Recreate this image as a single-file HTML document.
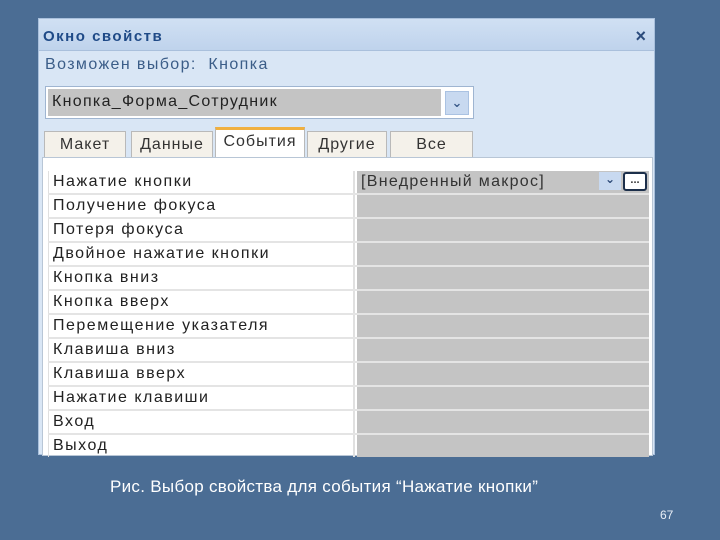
<!DOCTYPE html>
<html><head><meta charset="utf-8"><style>
*{margin:0;padding:0;box-sizing:border-box}
body{width:720px;height:540px;overflow:hidden;background:#4b6d94;font-family:"Liberation Sans","DejaVu Sans",sans-serif;position:relative}
.abs{position:absolute}
.panel{left:38px;top:18px;width:617px;height:437px;background:#d9e6f5;border:1px solid #a9c0dc}
.title{left:0;top:0;width:615px;height:32px;background:linear-gradient(#d0e0f3,#bfd3ec);border-bottom:1px solid #aac0dc}
.t{font-size:15px;color:#1f4a87;font-weight:bold;left:4px;top:9px;letter-spacing:1.5px}
.x{right:8px;top:7px;font-size:18px;color:#2b4b7c;font-weight:bold}
.sub{left:6px;top:37px;font-size:16px;color:#3b5d88;letter-spacing:1.4px}
.dd{left:6px;top:67px;width:429px;height:33px;background:#fff;border:1px solid #9fb5d1}
.ddi{left:2px;top:2px;width:393px;height:27px;background:#c4c4c4;font-size:16px;color:#222;padding:4px 4px;letter-spacing:1.3px;white-space:nowrap}
.ddb{left:399px;top:4px;width:24px;height:24px;background:#c8d9f0;border:1px solid #aac2e2;color:#3a5a8a;font-size:13px;text-align:center;line-height:22px;font-weight:bold}
.tab{top:112px;height:27px;background:#f4f1ea;border:1px solid #b9b9b9;border-bottom:none;font-size:16px;color:#333;text-align:center;padding-top:4px;letter-spacing:1px}
.tab.on{top:108px;height:31px;background:#fff;border-top:3px solid #f0b040;padding-top:3px}
.grid{left:3px;top:138px;width:611px;height:299px;background:#fff;border:1px solid #b8c6d6}
.row{position:absolute;left:5px;width:601px;height:24px;border-bottom:2px solid #e4e4e4}
.l{position:absolute;left:0;top:0;width:307px;height:22px;border-right:2px solid #e0e0e0;font-size:16px;color:#222;padding:2px 4px;border-left:1px solid #e0e0e0;letter-spacing:1.5px;white-space:nowrap}
.r{position:absolute;left:309px;top:0;width:292px;height:22px;background:#c4c4c4}
.cap{left:110px;top:477px;font-size:17px;color:#fff;letter-spacing:0.3px;white-space:nowrap}
.pg{left:660px;top:508px;font-size:12px;color:#e8eef6}
</style></head><body>
<div class="abs panel">
 <div class="abs title"><div class="abs t">Окно свойств</div><div class="abs x">×</div></div>
 <div class="abs sub">Возможен выбор:&nbsp; Кнопка</div>
 <div class="abs dd"><div class="abs ddi">Кнопка_Форма_Сотрудник</div><div class="abs ddb">⌄</div></div>
 <div class="abs tab" style="left:5px;width:82px">Макет</div>
 <div class="abs tab" style="left:92px;width:82px">Данные</div>
 <div class="abs tab on" style="left:176px;width:90px">События</div>
 <div class="abs tab" style="left:268px;width:80px">Другие</div>
 <div class="abs tab" style="left:351px;width:83px">Все</div>
 <div class="abs grid">
  <div class="row" style="top:13px"><div class="l">Нажатие кнопки</div><div class="r" style="font-size:16px;color:#333;padding:2px 4px;letter-spacing:1.3px;white-space:nowrap">[Внедренный макрос]<span style="position:absolute;right:28px;top:1px;width:22px;height:18px;background:#c8d9f0;color:#2d4a78;font-size:12px;text-align:center;font-weight:bold;letter-spacing:0">⌄</span><span style="position:absolute;right:2px;top:1px;width:24px;height:19px;background:#fff;border:2px solid #1c2f4a;border-radius:3px;font-size:11px;text-align:center;line-height:12px;font-weight:bold;letter-spacing:0">...</span></div></div>
  <div class="row" style="top:37px"><div class="l">Получение фокуса</div><div class="r"></div></div>
  <div class="row" style="top:61px"><div class="l">Потеря фокуса</div><div class="r"></div></div>
  <div class="row" style="top:85px"><div class="l">Двойное нажатие кнопки</div><div class="r"></div></div>
  <div class="row" style="top:109px"><div class="l">Кнопка вниз</div><div class="r"></div></div>
  <div class="row" style="top:133px"><div class="l">Кнопка вверх</div><div class="r"></div></div>
  <div class="row" style="top:157px"><div class="l">Перемещение указателя</div><div class="r"></div></div>
  <div class="row" style="top:181px"><div class="l">Клавиша вниз</div><div class="r"></div></div>
  <div class="row" style="top:205px"><div class="l">Клавиша вверх</div><div class="r"></div></div>
  <div class="row" style="top:229px"><div class="l">Нажатие клавиши</div><div class="r"></div></div>
  <div class="row" style="top:253px"><div class="l">Вход</div><div class="r"></div></div>
  <div class="row" style="top:277px;height:20px;border:none"><div class="l">Выход</div><div class="r"></div></div>
 </div>
</div>
<div class="abs cap">Рис. Выбор свойства для события “Нажатие кнопки”</div>
<div class="abs pg">67</div>
</body></html>
